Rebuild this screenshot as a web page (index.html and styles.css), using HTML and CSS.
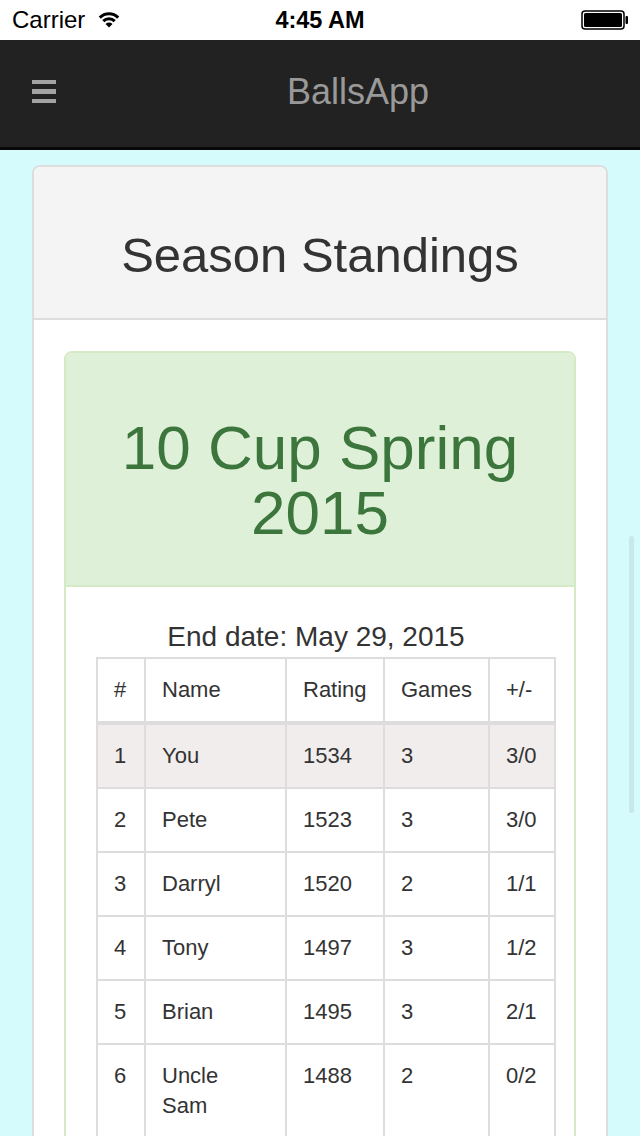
FILE: index.html
```html
<!DOCTYPE html>
<html lang="en">
<head>
<meta charset="utf-8">
<title>BallsApp</title>
<link rel="stylesheet" href="styles.css">
</head>
<body>
<div class="status">
  <div class="status-left">
    <span class="carrier">Carrier</span>
    <svg class="wifi" viewBox="0 0 22 18" width="22" height="18">
      <path d="M1.8 7.6 A13 13 0 0 1 20.2 7.6" fill="none" stroke="#000" stroke-width="3"/>
      <path d="M5.3 11.1 A8 8 0 0 1 16.7 11.1" fill="none" stroke="#000" stroke-width="3"/>
      <path d="M11 17.5 L7.5 14 A5 5 0 0 1 14.5 14 Z" fill="#000"/>
    </svg>
  </div>
  <div class="time">4:45 AM</div>
  <div class="status-right">
    <svg class="battery" viewBox="0 0 48 20" width="48" height="20">
      <rect x="1" y="1" width="42" height="18" rx="3" ry="3" fill="none" stroke="#000" stroke-width="1.5"/>
      <rect x="3" y="3" width="38" height="14" rx="1.5" ry="1.5" fill="#000"/>
      <rect x="44.5" y="6" width="2.5" height="8" rx="1" fill="#000"/>
    </svg>
  </div>
</div>

<header class="navbar">
  <div class="hamburger"><span></span><span></span><span></span></div>
  <div class="brand">BallsApp</div>
</header>

<main class="content">
  <section class="panel">
    <div class="panel-heading">
      <h1>Season Standings</h1>
    </div>
    <div class="panel-body">
      <section class="season">
        <div class="season-heading">
          <h2>10 Cup Spring 2015</h2>
        </div>
        <div class="season-body">
          <p class="end-date">End date: May 29, 2015</p>
          <table class="standings">
            <thead>
              <tr>
                <th class="c-rank">#</th>
                <th class="c-name">Name</th>
                <th class="c-rating">Rating</th>
                <th class="c-games">Games</th>
                <th class="c-pm">+/-</th>
              </tr>
            </thead>
            <tbody>
              <tr class="me"><td>1</td><td>You</td><td>1534</td><td>3</td><td>3/0</td></tr>
              <tr><td>2</td><td>Pete</td><td>1523</td><td>3</td><td>3/0</td></tr>
              <tr><td>3</td><td>Darryl</td><td>1520</td><td>2</td><td>1/1</td></tr>
              <tr><td>4</td><td>Tony</td><td>1497</td><td>3</td><td>1/2</td></tr>
              <tr><td>5</td><td>Brian</td><td>1495</td><td>3</td><td>2/1</td></tr>
              <tr><td>6</td><td>Uncle Sam</td><td>1488</td><td>2</td><td>0/2</td></tr>
            </tbody>
          </table>
        </div>
      </section>
    </div>
  </section>
</main>

<div class="scroll-indicator"></div>
</body>
</html>
```

FILE: styles.css
```css
html, body {
  margin: 0;
  padding: 0;
  height: 1136px;
  overflow: hidden;
}

body {
  font-family: "Liberation Sans", Arial, Helvetica, sans-serif;
  background: #d5fbfd;
  color: #333;
  position: relative;
}

/* status bar */
.status {
  height: 40px;
  background: #fff;
  display: flex;
  align-items: center;
  justify-content: space-between;
  padding: 0 12px;
  box-sizing: border-box;
  color: #000;
  font-size: 24px;
}

.status-left {
  display: flex;
  align-items: center;
  gap: 13px;
  width: 160px;
}

.carrier {
  line-height: 40px;
}

.wifi {
  display: block;
  margin-top: -2px;
}

.time {
  font-weight: bold;
  font-size: 23.5px;
  line-height: 40px;
}

.status-right {
  width: 160px;
  display: flex;
  justify-content: flex-end;
}

.battery {
  display: block;
  margin-right: -1px;
}

/* nav bar */
.navbar {
  height: 107px;
  background: #222;
  border-bottom: 3px solid #080808;
  display: flex;
  align-items: center;
  padding: 0 32px;
}

.hamburger {
  width: 24px;
  display: flex;
  flex-direction: column;
  gap: 5px;
  margin-top: -4px;
}

.hamburger span {
  display: block;
  height: 4.5px;
  background: #a3a3a3;
}

.brand {
  margin-left: 231px;
  color: #999;
  font-size: 36px;
  line-height: 40px;
  margin-top: -4px;
}

/* content */
.content {
  padding: 15px 32px 0;
}

.panel {
  background: #fff;
  border: 2px solid #ddd;
  border-radius: 8px;
}

.panel-heading {
  background: #f4f4f4;
  border-bottom: 2px solid #ddd;
  border-radius: 6px 6px 0 0;
  padding: 62px 20px 36px;
}

.panel-heading h1 {
  margin: 0;
  font-size: 49px;
  line-height: 53px;
  font-weight: normal;
  text-align: center;
  color: #333;
}

.panel-body {
  padding: 31px 30px 30px;
}

.season {
  border: 2px solid #d6e9c6;
  border-radius: 8px;
  background: #fff;
}

.season-heading {
  background: #dff0d8;
  border-bottom: 2px solid #d6e9c6;
  border-radius: 6px 6px 0 0;
  padding: 62px 20px 40px;
}

.season-heading h2 {
  margin: 0;
  color: #3c763d;
  font-size: 62px;
  line-height: 65px;
  font-weight: normal;
  text-align: center;
}

.season-body {
  padding: 30px;
}

.end-date {
  margin: 0;
  padding-right: 8px;
  font-size: 28px;
  line-height: 40px;
  text-align: center;
  color: #333;
}

.standings {
  border-collapse: collapse;
  table-layout: fixed;
  width: 460px;
  font-size: 22px;
  line-height: 30px;
  color: #333;
}

.standings th,
.standings td {
  box-sizing: border-box;
  border: 2px solid #ddd;
  padding: 16px;
  text-align: left;
  vertical-align: top;
  font-weight: normal;
}

.standings thead th {
  border-bottom: 4px solid #ddd;
}

.c-rank { width: 48px; }
.c-name { width: 141px; }
.c-rating { width: 98px; }
.c-games { width: 105px; }
.c-pm { width: 66px; }

.standings tr.me td {
  background: #f2eded;
}

.scroll-indicator {
  position: absolute;
  right: 6px;
  top: 536px;
  width: 5px;
  height: 277px;
  border-radius: 3px;
  background: #c8e8ea;
}
```
